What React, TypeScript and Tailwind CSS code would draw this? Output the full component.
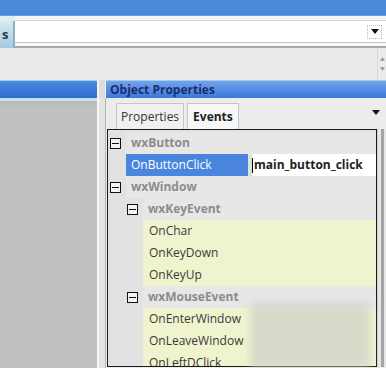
import React from 'react';

const CollapseIcon: React.FC = () => (
  <svg width="11" height="11" viewBox="0 0 11 11" className="shrink-0">
    <rect x="0.5" y="0.5" width="10" height="10" fill="#f4f4f4" stroke="#111" />
    <line x1="2" y1="5.5" x2="9" y2="5.5" stroke="#111" />
  </svg>
);

const Arrow: React.FC<{ className?: string }> = ({ className }) => (
  <svg width="8" height="5" viewBox="0 0 8 5" className={className}>
    <path d="M0 0h8L4 5z" fill="#111" />
  </svg>
);

type Row =
  | { kind: 'cat'; level: 0 | 1; label: string }
  | { kind: 'prop'; level: 1 | 2; label: string; value?: string; selected?: boolean };

const rows: Row[] = [
  { kind: 'cat', level: 0, label: 'wxButton' },
  { kind: 'prop', level: 1, label: 'OnButtonClick', value: 'main_button_click', selected: true },
  { kind: 'cat', level: 0, label: 'wxWindow' },
  { kind: 'cat', level: 1, label: 'wxKeyEvent' },
  { kind: 'prop', level: 2, label: 'OnChar' },
  { kind: 'prop', level: 2, label: 'OnKeyDown' },
  { kind: 'prop', level: 2, label: 'OnKeyUp' },
  { kind: 'cat', level: 1, label: 'wxMouseEvent' },
  { kind: 'prop', level: 2, label: 'OnEnterWindow' },
  { kind: 'prop', level: 2, label: 'OnLeaveWindow' },
  { kind: 'prop', level: 2, label: 'OnLeftDClick' },
];

const TreeRow: React.FC<{ row: Row }> = ({ row }) => {
  if (row.kind === 'cat') {
    return (
      <div className="flex h-[22px] shrink-0 items-center">
        <div className={`flex h-full shrink-0 items-center ${row.level === 0 ? 'w-[18px] pl-[2px]' : 'w-[35px] pl-[19px]'}`}>
          <CollapseIcon />
        </div>
        <div className="flex h-full flex-1 items-center bg-[#e7e7e7] pl-[5px] font-bold text-[#8c8c8c]">
          {row.label}
        </div>
      </div>
    );
  }
  if (row.selected) {
    return (
      <div className="flex h-[22px] shrink-0 items-center">
        <div className="h-full w-[18px] shrink-0" />
        <div className="flex h-full w-[122px] shrink-0 items-center bg-[#4a86de] pl-[5px] text-white">
          {row.label}
        </div>
        <div className="ml-[2px] flex h-full flex-1 items-center border-l-2 border-[#cfe8c8] bg-white">
          <span className="mr-[1px] h-[15px] w-[1px] bg-black" />
          <span className="font-bold text-[#222]">{row.value}</span>
        </div>
      </div>
    );
  }
  return (
    <div className="flex h-[22px] shrink-0 items-center">
      <div className="h-full w-[35px] shrink-0" />
      <div className="flex h-full flex-1 items-center bg-[#eff4cf] pl-[6px] text-[#3a3a3a]">{row.label}</div>
    </div>
  );
};

export default function App() {
  return (
    <div className="relative flex h-[368px] w-[386px] flex-col overflow-hidden bg-[#ececec] font-['Open_Sans',sans-serif] text-[12px] leading-none text-[#333]">
      {/* window title bar */}
      <div className="h-[16px] shrink-0 border-b border-[#6d9fe0] bg-[#4a8ad9]" />

      {/* toolbar */}
      <div className="flex h-[32px] shrink-0">
        <div className="flex w-[15px] flex-col">
          <div className="h-[5px] bg-[#e4eef2]" />
          <div className="flex flex-1 items-center border-r-2 border-[#8fb0c4] bg-gradient-to-b from-[#d6ecf2] to-[#a4c8dc] pl-[2px] text-[13px] font-bold text-[#2a3a4a]">
            s
          </div>
        </div>
        <div className="flex flex-1 flex-col">
          <div className="h-[4px] bg-[#f6f6f6]" />
          <div className="h-[1px] bg-[#d4d4d4]" />
          <div className="flex flex-1 items-center justify-end bg-white pr-[4px]">
            <div className="flex h-[14px] w-[15px] items-center justify-center border border-dotted border-[#bbb]">
              <Arrow />
            </div>
          </div>
          <div className="h-[1px] bg-[#c8c8c8]" />
          <div className="h-[3px] bg-[#f8f8f8]" />
          <div className="h-[2px] bg-[#a8a8a8]" />
        </div>
      </div>

      {/* empty bar */}
      <div className="flex h-[32px] shrink-0 justify-end bg-[#ebebeb]">
        <div className="flex w-[9px] flex-col items-center gap-[6px] border-l border-[#d8d8d8] pt-[9px]">
          <svg width="5" height="4" viewBox="0 0 5 4"><path d="M0 4h5L2.5 0z" fill="#999" /></svg>
          <svg width="5" height="4" viewBox="0 0 5 4"><path d="M0 0h5L2.5 4z" fill="#999" /></svg>
        </div>
      </div>

      {/* panel captions */}
      <div className="flex h-[18px] shrink-0">
        <div className="w-[97px] border-t border-[#9fd2e8] bg-gradient-to-b from-[#4d8ae0] to-[#2f6ad2]" />
        <div className="w-[9px] border-l-2 border-r border-[#f4f4f4] bg-[#dcdcdc]" />
        <div className="flex flex-1 items-center border-t border-[#9fd2e8] bg-gradient-to-b from-[#72a3ea] to-[#3a79da] pl-[4px]">
          <span className="text-[12px] font-bold text-[#1c2d6e]">Object Properties</span>
        </div>
      </div>

      {/* panels */}
      <div className="flex min-h-0 flex-1">
        <div className="flex w-[97px] flex-col">
          <div className="h-[3px] bg-[#c4e2e2]" />
          <div className="h-[4px] bg-[#b9bdb8]" />
          <div className="flex-1 bg-[#c0c0c0]" />
        </div>
        <div className="w-[9px] border-l-2 border-r border-l-[#f6f6f6] border-r-[#b4b4b4] bg-[#e4e4e4]" />

        <div className="flex min-w-0 flex-1 flex-col pl-[1px]">
          {/* tabs */}
          <div className="flex h-[31px] shrink-0 items-end pl-[9px] pr-[6px]">
            <div className="flex h-[26px] items-center border border-b-0 border-[#c6c6c6] bg-[#f0f0f0] px-[4px]">
              Properties
            </div>
            <div className="ml-[3px] flex h-[26px] items-center border border-b-0 border-[#c6c6c6] bg-[#f7f7f7] px-[5px] font-bold text-[#222]">
              Events
            </div>
            <div className="flex h-full flex-1 items-center justify-end pb-[2px]">
              <Arrow />
            </div>
          </div>

          {/* property grid */}
          <div className="flex min-h-0 flex-1 pb-[1px]">
            <div className="flex min-w-0 flex-1 flex-col overflow-hidden border border-[#1a1a1a] bg-[#e2e2e2] pt-[2px]">
              {rows.map((r, i) => (
                <TreeRow key={i} row={r} />
              ))}
            </div>
            <div className="flex w-[9px] justify-center border-l border-[#d0d0d0] bg-[#e6e6e6]">
              <div className="w-[3px] bg-[#a4a4a4]" />
            </div>
          </div>
        </div>
      </div>

      {/* blurred smudge over the lower grid */}
      <div className="absolute left-[250px] top-[302px] h-[66px] w-[120px] bg-[#cfcfc8] opacity-70 blur-[4px]" />
    </div>
  );
}
